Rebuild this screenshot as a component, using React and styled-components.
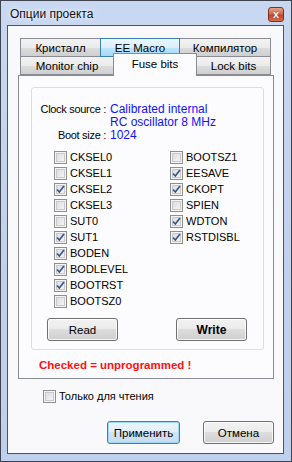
import React from "react";
import styled, { createGlobalStyle } from "styled-components";

const GlobalStyle = createGlobalStyle`
  html, body {
    margin: 0;
    padding: 0;
    background: #c4d4ee;
  }
  * {
    box-sizing: border-box;
  }
`;

const leftBits = [
  ["CKSEL0", false],
  ["CKSEL1", false],
  ["CKSEL2", true],
  ["CKSEL3", false],
  ["SUT0", false],
  ["SUT1", true],
  ["BODEN", true],
  ["BODLEVEL", true],
  ["BOOTRST", true],
  ["BOOTSZ0", false],
];

const rightBits = [
  ["BOOTSZ1", false],
  ["EESAVE", true],
  ["CKOPT", true],
  ["SPIEN", false],
  ["WDTON", true],
  ["RSTDISBL", true],
];

function CheckBox({ checked }) {
  return (
    <Box>
      {checked && (
        <svg width="9" height="9" viewBox="0 0 9 9">
          <path
            d="M1 4.5 L3.3 7 L8 1"
            fill="none"
            stroke="#3d5490"
            strokeWidth="1.7"
          />
        </svg>
      )}
    </Box>
  );
}

function Tab({ label, width, hot, selected }) {
  return (
    <TabItem $w={width} $hot={hot} $selected={selected}>
      {label}
    </TabItem>
  );
}

export default function App() {
  return (
    <>
      <GlobalStyle />
      <Window>
        <TitleBar>
          <Title>Опции проекта</Title>
          <CloseButton>x</CloseButton>
        </TitleBar>
        <Client>
          <Tabs>
            <TabRow>
              <Tab label="Кристалл" width={81} />
              <Tab label="EE Macro" width={80} hot />
              <Tab label="Компилятор" width={92} />
            </TabRow>
            <TabRow $second>
              <Tab label="Monitor chip" width={94} />
              <Tab label="Fuse bits" width={84} selected />
              <Tab label="Lock bits" width={75} />
            </TabRow>
            <Panel>
              <Group>
                <InfoGrid>
                  <InfoLabel>Clock source :</InfoLabel>
                  <InfoValue>
                    Calibrated internal
                    <br />
                    RC oscillator 8 MHz
                  </InfoValue>
                  <InfoLabel>Boot size :</InfoLabel>
                  <InfoValue>1024</InfoValue>
                </InfoGrid>
                <BitsGrid>
                  <BitColumn>
                    {leftBits.map(([name, on]) => (
                      <BitRow key={name}>
                        <CheckBox checked={on} />
                        <span>{name}</span>
                      </BitRow>
                    ))}
                  </BitColumn>
                  <BitColumn>
                    {rightBits.map(([name, on]) => (
                      <BitRow key={name}>
                        <CheckBox checked={on} />
                        <span>{name}</span>
                      </BitRow>
                    ))}
                  </BitColumn>
                </BitsGrid>
                <GroupButtons>
                  <Button $w={71}>Read</Button>
                  <Button $w={71} $bold>
                    Write
                  </Button>
                </GroupButtons>
              </Group>
              <Warning>Checked = unprogrammed !</Warning>
            </Panel>
          </Tabs>
          <ReadOnlyRow>
            <CheckBox checked={false} />
            <span>Только для чтения</span>
          </ReadOnlyRow>
          <DialogButtons>
            <Button $w={73} $focused>
              Применить
            </Button>
            <Button $w={71}>Отмена</Button>
          </DialogButtons>
        </Client>
      </Window>
    </>
  );
}

const Window = styled.div`
  width: 292px;
  height: 462px;
  border: 1px solid #3f4450;
  background: linear-gradient(#c9d8f1, #c0d1ed 60%, #bfd0ec);
  padding: 0 7px 7px 6px;
  display: flex;
  flex-direction: column;
  font-family: "Liberation Sans", Arial, sans-serif;
  font-size: 11px;
  color: #000;
`;

const TitleBar = styled.div`
  height: 24px;
  display: flex;
  align-items: center;
  justify-content: space-between;
  padding: 2px 0 0 3px;
`;

const Title = styled.div`
  font-size: 12px;
  color: #111;
  text-shadow: 0 0 6px #eef4fc, 0 0 3px #eef4fc;
`;

const CloseButton = styled.div`
  width: 16px;
  height: 15px;
  margin-top: 1px;
  border: 1px solid #7c3020;
  border-radius: 3px;
  background: linear-gradient(#e8a08a, #d26a4c 45%, #c0432a 55%, #d2704f);
  color: #fff;
  font-weight: bold;
  font-size: 11px;
  line-height: 12px;
  text-align: center;
  text-shadow: 0 0 1px #5a1a0c;
`;

const Client = styled.div`
  flex: 1;
  border: 1px solid #4c5466;
  background: #f9f8fb;
  display: flex;
  flex-direction: column;
  padding: 12px 9px 0 10px;
`;

const Tabs = styled.div`
  display: flex;
  flex-direction: column;
  width: 256px;
`;

const TabRow = styled.div`
  display: flex;
  height: ${(p) => (p.$second ? "19px" : "18px")};
  padding-left: 2px;
  align-items: flex-start;
`;

const TabItem = styled.div`
  width: ${(p) => p.$w}px;
  height: ${(p) => (p.$selected ? "23px" : "19px")};
  margin-left: -1px;
  margin-top: ${(p) => (p.$selected ? "-3px" : "0")};
  &:first-child {
    margin-left: 0;
  }
  border: 1px solid ${(p) => (p.$hot ? "#3c7fb1" : "#898c95")};
  border-bottom: ${(p) => (p.$selected ? "none" : undefined)};
  background: ${(p) =>
    p.$selected
      ? "#fcfcfe"
      : p.$hot
      ? "linear-gradient(#eaf6fd, #d9f0fc 50%, #bee6fd 50%, #a7d9f5)"
      : "linear-gradient(#f2f2f2, #ebebeb 50%, #dddddd 50%, #cfcfcf)"};
  position: ${(p) => (p.$selected || p.$hot ? "relative" : "static")};
  z-index: ${(p) => (p.$selected ? 2 : p.$hot ? 1 : "auto")};
  display: flex;
  align-items: center;
  justify-content: center;
  padding-top: ${(p) => (p.$selected ? "0" : "1px")};
  padding-bottom: ${(p) => (p.$selected ? "3px" : "0")};
  font-size: 11.5px;
  white-space: nowrap;
`;

const Panel = styled.div`
  height: 304px;
  border: 1px solid #898c95;
  background: #fcfcfe;
  padding: 11px 9px 0 12px;
  display: flex;
  flex-direction: column;
`;

const Group = styled.div`
  height: 263px;
  border: 1px solid #d5dfe5;
  border-radius: 3px;
  padding-top: 15px;
  display: flex;
  flex-direction: column;
`;

const InfoGrid = styled.div`
  display: grid;
  grid-template-columns: 74px auto;
  column-gap: 4px;
  line-height: 13px;
`;

const InfoLabel = styled.div`
  text-align: right;
  letter-spacing: -0.3px;
`;

const InfoValue = styled.div`
  color: #1010ff;
  font-size: 12px;
`;

const BitsGrid = styled.div`
  display: grid;
  grid-template-columns: 116px 100px;
  margin-top: 7px;
  padding-left: 22px;
`;

const BitColumn = styled.div`
  display: flex;
  flex-direction: column;
`;

const BitRow = styled.div`
  height: 16px;
  display: flex;
  align-items: center;
  gap: 3px;
`;

const Box = styled.div`
  width: 13px;
  height: 13px;
  flex: none;
  border: 1px solid #8e8f8f;
  background: linear-gradient(135deg, #d6d6d6, #f4f4f4 80%);
  box-shadow: inset 0 0 0 1px #f4f4f4, inset 0 0 0 2px #c9c9c9;
  display: flex;
  align-items: center;
  justify-content: center;
  & svg {
    display: block;
  }
`;

const GroupButtons = styled.div`
  display: flex;
  gap: 58px;
  padding-left: 15px;
  margin-top: 9px;
`;

const Button = styled.div`
  width: ${(p) => p.$w}px;
  height: 23px;
  border: 1px solid ${(p) => (p.$focused ? "#3c7fb1" : "#707070")};
  border-radius: 3px;
  background: ${(p) =>
    p.$focused
      ? "linear-gradient(#eaf4fb, #e2eef8 50%, #d2e4f3 50%, #c6dcee)"
      : "linear-gradient(#f2f2f2, #ebebeb 50%, #dddddd 50%, #cfcfcf)"};
  box-shadow: inset 0 0 0 1px
    ${(p) => (p.$focused ? "#9fd8f6" : "rgba(255, 255, 255, 0.8)")};
  display: flex;
  align-items: center;
  justify-content: center;
  font-size: ${(p) => (p.$bold ? "12px" : "11.5px")};
  font-weight: ${(p) => (p.$bold ? "bold" : "normal")};
`;

const Warning = styled.div`
  margin: 9px 0 0 8px;
  color: #ff1010;
  font-weight: bold;
  font-size: 11.5px;
  line-height: 13px;
`;

const ReadOnlyRow = styled.div`
  display: flex;
  align-items: center;
  gap: 3px;
  height: 16px;
  margin: 9px 0 0 25px;
`;

const DialogButtons = styled.div`
  display: flex;
  justify-content: flex-end;
  gap: 23px;
  margin-top: 17px;
`;
